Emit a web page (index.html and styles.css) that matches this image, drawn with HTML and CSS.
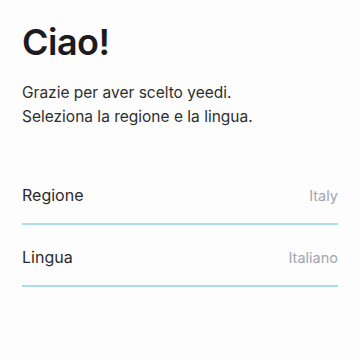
FILE: index.html
```html
<!DOCTYPE html>
<html>
<head>
<meta charset="utf-8">
<link rel="stylesheet" href="styles.css">
</head>
<body>
<main class="page">
  <h1 class="title">Ciao!</h1>
  <p class="intro">Grazie per aver scelto yeedi.<br>Seleziona la regione e la lingua.</p>
  <div class="list">
    <div class="row"><span class="label">Regione</span><span class="value">Italy</span></div>
    <div class="row"><span class="label">Lingua</span><span class="value">Italiano</span></div>
  </div>
</main>
</body>
</html>
```
FILE: styles.css
```css
html, body {
  margin: 0;
  padding: 0;
  background: #fdfdfd;
}
.page {
  width: 360px;
  height: 360px;
  box-sizing: border-box;
  padding: 20px 22px 0 22px;
  font-family: Inter, "Liberation Sans", Arial, sans-serif;
}
.title {
  margin: 0;
  font-size: 36px;
  font-weight: 600;
  line-height: 44px;
  color: #1c1c1e;
  letter-spacing: -0.5px;
}
.intro {
  margin: 17px 0 0 0;
  font-size: 15.5px;
  line-height: 24px;
  color: #2e2e30;
}
.list {
  margin-top: 55px;
  display: flex;
  flex-direction: column;
  gap: 21px;
}
.row {
  display: flex;
  justify-content: space-between;
  align-items: baseline;
  height: 39px;
  border-bottom: 2px solid #abdfe4;
}
.label {
  font-size: 16px;
  line-height: 22px;
  color: #2a2a2c;
}
.value {
  font-size: 14.5px;
  line-height: 22px;
  color: #a0a6ae;
}
```
